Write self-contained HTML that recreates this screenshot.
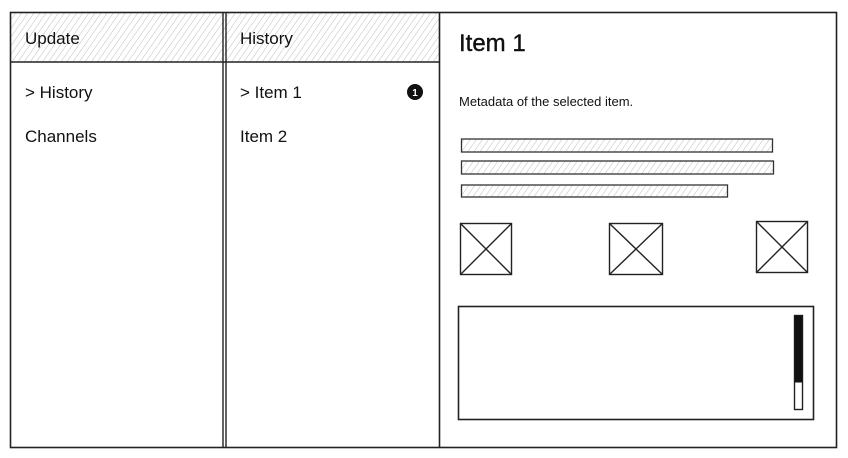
<!DOCTYPE html>
<html><head><meta charset="utf-8"><style>
html,body{margin:0;padding:0;background:#fff;width:848px;height:458px;overflow:hidden}
text{font-family:"Liberation Sans",sans-serif;fill:#111}
</style></head><body>
<svg width="848" height="458" viewBox="0 0 848 458" xmlns="http://www.w3.org/2000/svg">
<defs>
<pattern id="h" width="5" height="5" patternUnits="userSpaceOnUse" patternTransform="rotate(35)">
<line x1="0" y1="0" x2="0" y2="5" stroke="#bdbdbd" stroke-width="1"/>
</pattern>
</defs>
<rect x="11" y="12" width="428" height="50" fill="url(#h)"/>
<rect x="10.5" y="12.5" width="826" height="435" fill="none" stroke="#222" stroke-width="1.6"/>
<line x1="10" y1="62" x2="440" y2="62" stroke="#222" stroke-width="1.6"/>
<line x1="223" y1="12" x2="223" y2="448" stroke="#222" stroke-width="1.4"/>
<line x1="226" y1="12" x2="226" y2="448" stroke="#222" stroke-width="1.4"/>
<line x1="439.5" y1="12" x2="439.5" y2="448" stroke="#222" stroke-width="1.6"/>
<text x="25" y="44" font-size="17">Update</text>
<text x="240" y="44" font-size="17">History</text>
<text x="25" y="98" font-size="17">&gt; History</text>
<text x="25" y="142" font-size="17">Channels</text>
<text x="240" y="98" font-size="17">&gt; Item 1</text>
<text x="240" y="142" font-size="17">Item 2</text>
<circle cx="415" cy="92" r="8" fill="#111"/>
<text x="415" y="96" font-size="10" font-weight="bold" text-anchor="middle" style="fill:#fff">1</text>
<text x="459" y="51" font-size="24" style="stroke:#111;stroke-width:0.4">Item 1</text>
<text x="459" y="106" font-size="13">Metadata of the selected item.</text>
<g stroke="#333" stroke-width="1.3" fill="url(#h)">
<rect x="461.5" y="139" width="311" height="13"/>
<rect x="461.5" y="161" width="312" height="13"/>
<rect x="461.5" y="185" width="266" height="12"/>
</g>
<g stroke="#222" stroke-width="1.4" fill="none">
<rect x="460.5" y="223.5" width="51" height="51"/><path d="M460.5 223.5L511.5 274.5M511.5 223.5L460.5 274.5"/>
<rect x="609.5" y="223.5" width="53" height="51"/><path d="M609.5 223.5L662.5 274.5M662.5 223.5L609.5 274.5"/>
<rect x="756.5" y="221.5" width="51" height="51"/><path d="M756.5 221.5L807.5 272.5M807.5 221.5L756.5 272.5"/>
<rect x="458.5" y="306.5" width="355" height="113" stroke-width="1.6"/>
<rect x="794.5" y="315.5" width="8" height="94"/>
</g>
<rect x="794.5" y="315.5" width="8" height="67" fill="#111"/>
</svg>
</body></html>
